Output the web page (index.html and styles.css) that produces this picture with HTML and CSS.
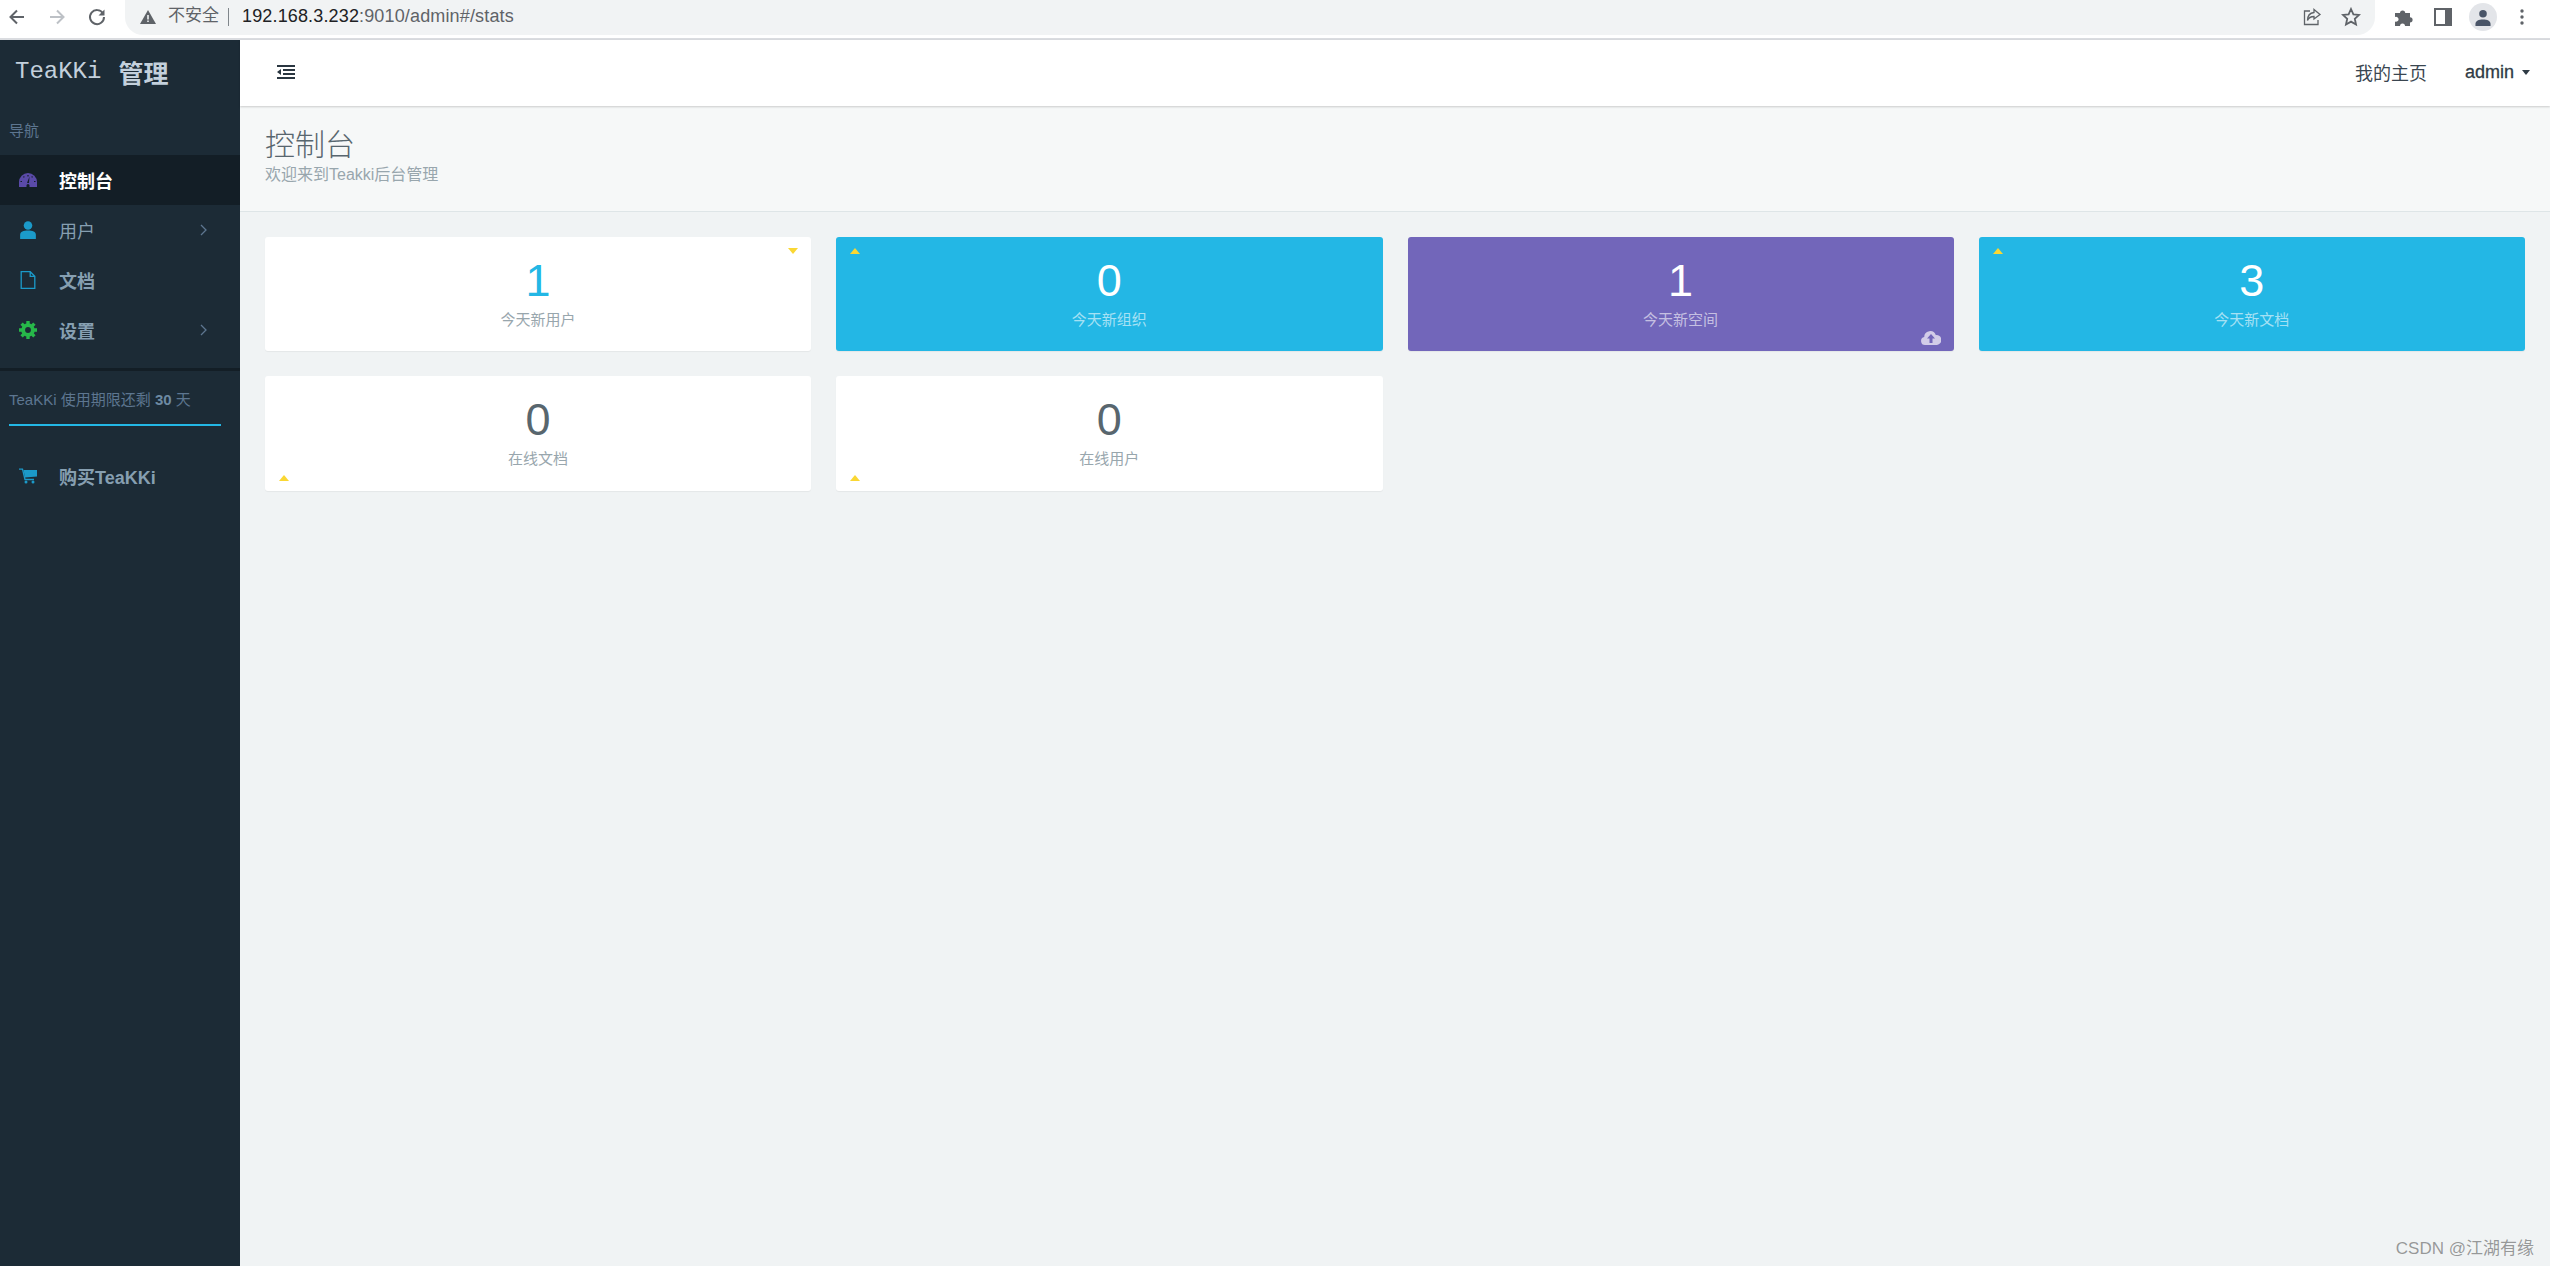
FILE: index.html
```html
<!DOCTYPE html>
<html lang="zh">
<head>
<meta charset="utf-8">
<title>TeaKKi 管理</title>
<link rel="stylesheet" href="styles.css">
</head>
<body>
<div class="chrome">
  <div class="chrome-nav">
    <svg class="ci" viewBox="0 0 20 20"><path d="M17 10H4M10 3.5 3.5 10l6.500 6.500" fill="none" stroke="#5f6368" stroke-width="2"/></svg>
    <svg class="ci" viewBox="0 0 20 20"><path d="M3 10h13M10 3.500 16.500 10 10 16.500" fill="none" stroke="#bdc1c6" stroke-width="2"/></svg>
    <svg class="ci" viewBox="0 0 20 20"><path d="M16 6.500A7 7 0 1 0 17 10" fill="none" stroke="#5f6368" stroke-width="2"/><path d="M17.500 2.500v6h-6z" fill="#5f6368"/></svg>
  </div>
  <div class="omnibox">
    <svg class="warn" viewBox="0 0 16 14"><path d="M8 0 16 14H0z" fill="#5f6368"/><path d="M7.200 5h1.600v4.500H7.200zM7.200 10.500h1.600V12H7.200z" fill="#f1f3f4"/></svg>
    <span class="insecure">不安全</span>
    <span class="sep"></span>
    <span class="url"><b>192.168.3.232</b>:9010/admin#/stats</span>
    <span class="spacer"></span>
    <svg class="oi" viewBox="0 0 20 20"><path d="M8 4H2.500v13.500H16V13" fill="none" stroke="#5f6368" stroke-width="1.300"/><path d="M12 2.500 18 7.500 12 12V9.500C9 9.500 6.500 11 5.500 13.500 5.500 9 8 6 12 5.500z" fill="none" stroke="#5f6368" stroke-width="1.300"/></svg>
    <svg class="oi" viewBox="0 0 20 20"><path d="M10 2l2.400 5.300 5.600.6-4.200 3.900 1.200 5.700L10 14.600 5 17.500l1.200-5.700L2 7.900l5.600-.6z" fill="none" stroke="#5f6368" stroke-width="1.800"/></svg>
  </div>
  <div class="chrome-right">
    <svg class="puzzle" viewBox="0 1 19 18"><path d="M1 6h5a2.600 2.600 0 1 1 5.200 0H16v4.200a2.600 2.600 0 1 1 0 5.200V19h-5a2.500 2.500 0 1 0-5 0H1v-4.500a2.500 2.500 0 1 0 0-4.500z" fill="#5f6368"/></svg>
    <svg class="panel" viewBox="0 0 18 18"><path d="M0 0h18v18H0zM2 2v14h9V2z" fill="#5f6368" fill-rule="evenodd"/></svg>
    <span class="avatar"><svg viewBox="0 0 18 18"><circle cx="9" cy="5" r="4" fill="#4a5568"/><path d="M1 18v-2c0-3.500 3.500-5 8-5s8 1.500 8 5v2z" fill="#4a5568"/></svg></span>
    <svg class="dots" viewBox="0 0 4 16"><circle cx="2" cy="2" r="1.700" fill="#5f6368"/><circle cx="2" cy="8" r="1.700" fill="#5f6368"/><circle cx="2" cy="14" r="1.700" fill="#5f6368"/></svg>
  </div>
</div>

<div class="app">
  <aside class="sidebar">
    <div class="brand"><span class="brand-mono">TeaKKi</span><span class="brand-cn">管理</span></div>
    <div class="nav-head">导航</div>
    <ul class="nav">
      <li class="nav-item active">
        <svg class="nav-icon" viewBox="0 0 18 14"><path d="M0 14V9a9 9 0 0 1 18 0v5z" fill="#5a4aa8"/><path d="M9 2v1.500M4.500 3.500l.8.800M13.500 3.500l-.8.800M1.500 8.500H3M15 8.500h1.500" stroke="#131e26" stroke-width="1.200"/><path d="M10.500 3.500 8 10h2z" fill="#131e26"/><path d="M7.500 12.500a1.500 1.500 0 0 1 3 0V14h-3z" fill="#131e26"/></svg>
        <span class="nav-label strong">控制台</span>
      </li>
      <li class="nav-item">
        <svg class="nav-icon" viewBox="0 0 14 16"><circle cx="7" cy="4" r="3.800" fill="#1b9ac9"/><path d="M0 16v-3.500C0 9.500 3 8.500 7 8.500s7 1 7 4V16z" fill="#1b9ac9"/></svg>
        <span class="nav-label">用户</span>
        <svg class="chev" viewBox="0 0 7 12"><path d="M1 1l5 5-5 5" fill="none" stroke="#5d7690" stroke-width="1.300"/></svg>
      </li>
      <li class="nav-item">
        <svg class="nav-icon" viewBox="0 0 15 18"><path d="M.7.700h9l4.600 4.600v12H.7zM9.700.7v4.600h4.600" fill="none" stroke="#1b9ac9" stroke-width="1.300"/></svg>
        <span class="nav-label bold">文档</span>
      </li>
      <li class="nav-item">
        <svg class="nav-icon" viewBox="0 0 16 16"><circle cx="8" cy="8" r="6" fill="#27b84a"/><path d="M8 0v16M0 8h16M2.300 2.300l11.400 11.400M13.700 2.300 2.300 13.700" stroke="#27b84a" stroke-width="3"/><circle cx="8" cy="8" r="2.600" fill="#1c2b36"/></svg>
        <span class="nav-label bold">设置</span>
        <svg class="chev" viewBox="0 0 7 12"><path d="M1 1l5 5-5 5" fill="none" stroke="#5d7690" stroke-width="1.300"/></svg>
      </li>
    </ul>
    <div class="side-divider"></div>
    <div class="trial">TeaKKi 使用期限还剩 <b>30</b> 天</div>
    <div class="trial-bar"></div>
    <div class="nav-item buy">
      <svg class="nav-icon" viewBox="0 0 18 15"><path d="M0 .7h3.500L6 11h9" fill="none" stroke="#1b9ac9" stroke-width="1.300"/><path d="M4.500 1.500H18V8L6 9z" fill="#1b9ac9"/><circle cx="7" cy="13.500" r="1.500" fill="#1b9ac9"/><circle cx="14" cy="13.500" r="1.500" fill="#1b9ac9"/></svg>
      <span class="nav-label bold">购买TeaKKi</span>
    </div>
  </aside>

  <div class="main">
    <header class="navbar">
      <svg class="menu" viewBox="0 0 18 14"><path d="M0 0h18v2H0zM6 4h12v2H6zM6 8h12v2H6zM0 12h18v2H0zM4 4v6L0 7z" fill="#2a3640"/></svg>
      <span class="nav-link">我的主页</span>
      <span class="user">admin</span>
      <span class="caret"></span>
    </header>
    <section class="page-head">
      <h1>控制台</h1>
      <p>欢迎来到Teakki后台管理</p>
    </section>
    <section class="cards">
      <div class="card"><i class="tri down tr"></i><div class="num cyan">1</div><div class="lbl">今天新用户</div></div>
      <div class="card info"><i class="tri up tl"></i><div class="num">0</div><div class="lbl">今天新组织</div></div>
      <div class="card purple"><div class="num">1</div><div class="lbl">今天新空间</div>
        <svg class="cloud" viewBox="0 0 20 15"><path d="M4 15a4 4 0 0 1-.8-7.900A6 6 0 0 1 14.800 5 5 5 0 0 1 16 15z" fill="#d2cce8"/><path d="M10 4l4 4.500h-2.500V13h-3V8.500H6z" fill="#7266ba"/></svg>
      </div>
      <div class="card info"><i class="tri up tl"></i><div class="num">3</div><div class="lbl">今天新文档</div></div>
      <div class="card"><i class="tri up bl"></i><div class="num">0</div><div class="lbl">在线文档</div></div>
      <div class="card"><i class="tri up bl"></i><div class="num">0</div><div class="lbl">在线用户</div></div>
    </section>
  </div>
</div>
<div class="watermark">CSDN @江湖有缘</div>
</body>
</html>
```
FILE: styles.css
```css
* { box-sizing: border-box; }
html, body { margin: 0; height: 100%; overflow: hidden; }
body {
  display: flex;
  flex-direction: column;
  font-family: "Liberation Sans", "Noto Sans CJK SC", sans-serif;
  color: #58666e;
  background: #f0f3f4;
}

/* browser chrome */
.chrome {
  flex: none;
  height: 40px;
  display: flex;
  background: #fff;
  border-bottom: 2px solid #dadce0;
}
.chrome-nav {
  width: 125px;
  flex: none;
  display: flex;
  align-items: center;
  gap: 20px;
  padding: 0 0 5px 7px;
}
.ci { width: 20px; height: 20px; }
.omnibox {
  width: 2250px;
  height: 35px;
  flex: none;
  display: flex;
  align-items: center;
  padding: 0 14px 2px 15px;
  background: #f1f3f4;
  border-radius: 0 0 18px 18px;
}
.warn { width: 16px; height: 14px; margin-right: 12px; }
.insecure { font-size: 17px; line-height: 20px; margin-bottom: 2px; color: #5f6368; }
.sep { width: 1px; height: 18px; background: #80868b; margin: 0 13px 0 9px; }
.url { font-size: 18px; color: #5f6368; letter-spacing: .15px; }
.url b { font-weight: 400; color: #202124; }
.spacer { flex: 1; }
.oi { width: 20px; height: 20px; margin-left: 19px; }
.chrome-right {
  flex: 1;
  display: flex;
  align-items: center;
  padding: 0 0 5px 19px;
}
.puzzle { width: 19px; height: 18px; }
.panel { width: 18px; height: 18px; margin-left: 21px; }
.avatar {
  width: 28px;
  height: 28px;
  margin-left: 17px;
  padding: 6px 5px 5px;
  border-radius: 50%;
  background: #e3e5e9;
  display: flex;
}
.avatar svg { width: 18px; height: 17px; }
.dots { width: 4px; height: 16px; margin-left: 23px; }

/* app */
.app { flex: 1; display: flex; min-height: 0; }
.sidebar {
  width: 240px;
  flex: none;
  background: #1c2b36;
  color: #869fb1;
}
.brand {
  height: 66px;
  padding: 0 0 3px 15px;
  display: flex;
  align-items: center;
  color: #c3d0dc;
  font-weight: 700;
}
.brand-mono {
  font-family: "Liberation Mono", monospace;
  font-size: 24px;
  font-weight: 400;
}
.brand-cn { font-size: 25px; margin-left: 17px; }
.nav-head {
  height: 49px;
  padding: 15px 0 0 9px;
  font-size: 15px;
  line-height: 20px;
  color: #5d7690;
}
.nav { list-style: none; margin: 0; padding: 0; }
.nav-item {
  height: 50px;
  display: flex;
  align-items: center;
  padding-left: 19px;
  position: relative;
}
.nav-item.active { background: #131e26; }
.nav-icon { width: 18px; height: 18px; flex: none; }
.nav-label { margin-left: 22px; font-size: 18px; color: #869fb1; }
.nav-label.strong { color: #fff; font-weight: 700; }
.nav-label.bold { font-weight: 700; }
.chev { width: 7px; height: 12px; margin-left: auto; margin-right: 33px; }
.side-divider { height: 3px; margin-top: 13px; background: #131e26; }
.trial {
  padding: 19px 0 0 9px;
  font-size: 15px;
  line-height: 20px;
  color: #5d7690;
}
.trial b { color: #6d8aa3; }
.trial-bar {
  height: 2px;
  width: 212px;
  margin: 14px 0 0 9px;
  background: #23b7e5;
}
.buy { margin-top: 25px; }

/* main */
.main { flex: 1; min-width: 0; display: flex; flex-direction: column; }
.navbar {
  flex: none;
  height: 66px;
  display: flex;
  align-items: center;
  padding: 0 20px 2px 37px;
  background: #fff;
  box-shadow: 0 1px 2px rgba(0,0,0,.18);
  position: relative;
}
.menu { width: 18px; height: 14px; margin-right: auto; }
.nav-link { font-size: 18px; color: #3a4650; }
.user { margin-left: 38px; font-size: 18px; color: #2f3b45; -webkit-text-stroke: .3px #2f3b45; }
.caret {
  margin-left: 8px;
  border-top: 5px solid #2f3b45;
  border-left: 4.500px solid transparent;
  border-right: 4.500px solid transparent;
}
.page-head {
  flex: none;
  height: 106px;
  padding: 18px 25px 0;
  background: #f6f8f8;
  border-bottom: 1px solid #dee5e7;
}
.page-head h1 {
  margin: 0;
  font-size: 30px;
  line-height: 41px;
  font-weight: 300;
  color: #58666e;
}
.page-head p {
  margin: 0;
  font-size: 16px;
  line-height: 20px;
  color: #98a6ad;
}
.cards {
  display: grid;
  grid-template-columns: repeat(4, 1fr);
  grid-template-rows: 114px 115px;
  gap: 25px;
  padding: 25px;
}
.card {
  position: relative;
  padding-top: 19px;
  background: #fff;
  border-radius: 3px;
  box-shadow: 0 1px 1px rgba(0,0,0,.05);
  text-align: center;
}
.card.info { background: #23b7e5; color: #fff; }
.card.purple { background: #7266ba; color: #fff; }
.num { font-size: 45px; line-height: 50px; }
.num.cyan { color: #23b7e5; }
.lbl { margin-top: 4px; font-size: 15px; line-height: 20px; color: #98a6ad; }
.info .lbl, .purple .lbl { color: rgba(255,255,255,.6); }
.tri {
  position: absolute;
  width: 0;
  height: 0;
  border-left: 5px solid transparent;
  border-right: 5px solid transparent;
}
.tri.up { border-bottom: 6px solid #fad733; }
.tri.down { border-top: 6px solid #fad733; }
.tri.tr { top: 11px; right: 13px; }
.tri.tl { top: 11px; left: 14px; }
.tri.bl { bottom: 10px; left: 14px; }
.cloud { position: absolute; right: 13px; bottom: 6px; width: 20px; height: 15px; }
.watermark {
  position: absolute;
  right: 16px;
  bottom: 7px;
  font-size: 17px;
  line-height: 20px;
  color: rgba(90,90,90,.6);
}
```
